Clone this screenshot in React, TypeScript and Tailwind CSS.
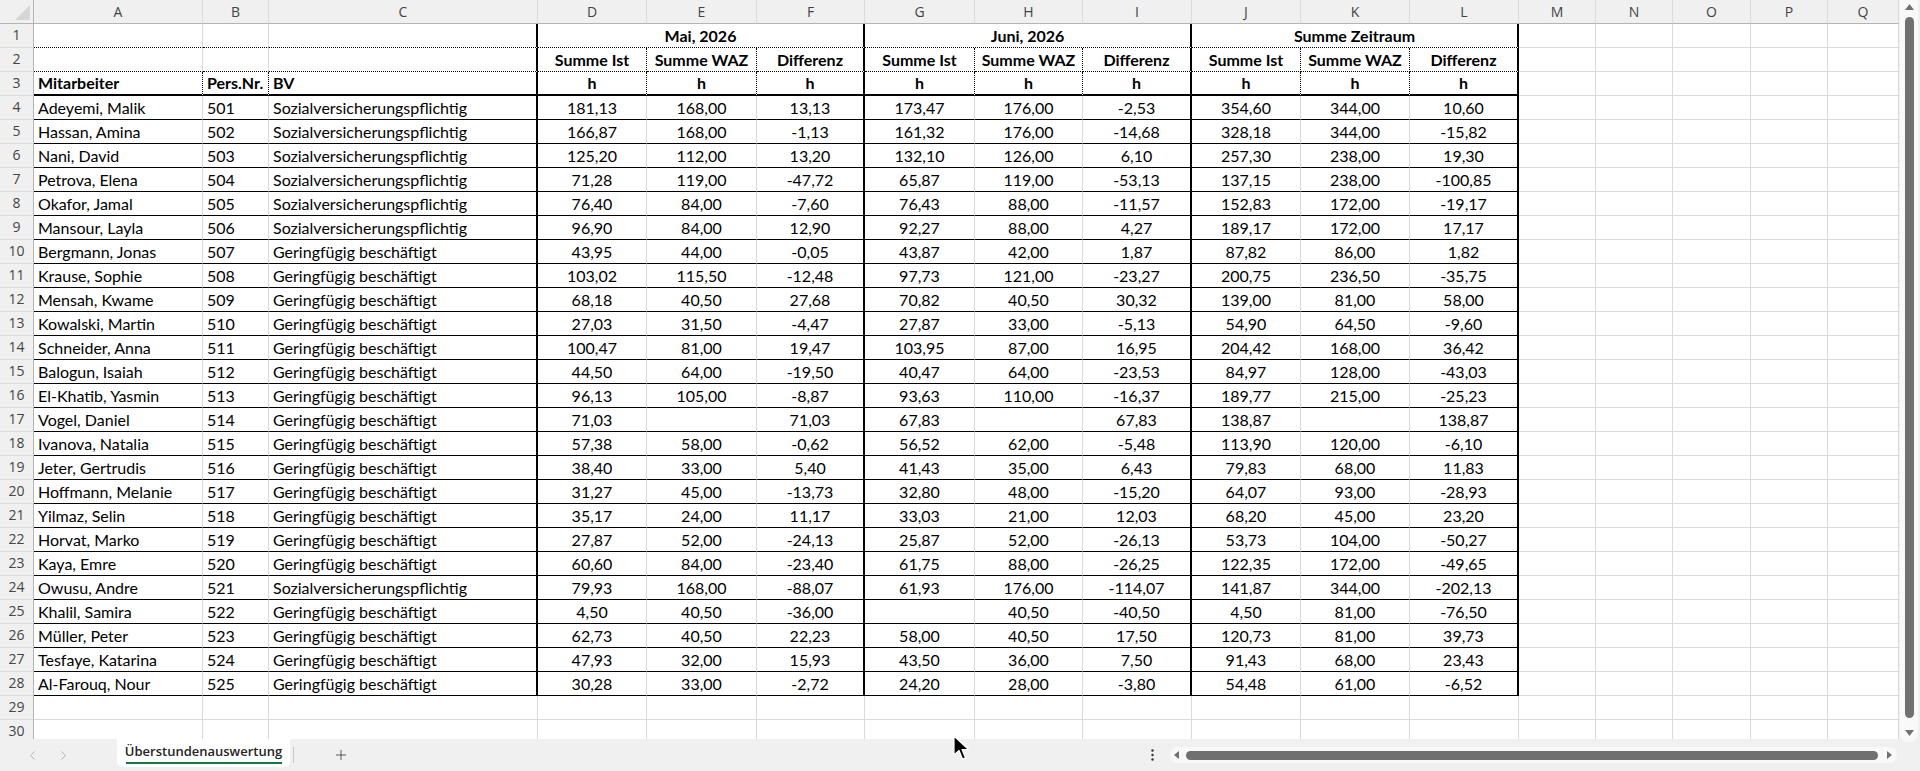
import React from "react";
import { ChevronLeft, ChevronRight, Plus } from "lucide-react";

const LETTERS = ["A", "B", "C", "D", "E", "F", "G", "H", "I", "J", "K", "L", "M", "N", "O", "P", "Q"];

const S = "Sozialversicherungspflichtig";
const G = "Geringfügig beschäftigt";

const DATA: string[][] = [
  ["Adeyemi, Malik", "501", S, "181,13", "168,00", "13,13", "173,47", "176,00", "-2,53", "354,60", "344,00", "10,60"],
  ["Hassan, Amina", "502", S, "166,87", "168,00", "-1,13", "161,32", "176,00", "-14,68", "328,18", "344,00", "-15,82"],
  ["Nani, David", "503", S, "125,20", "112,00", "13,20", "132,10", "126,00", "6,10", "257,30", "238,00", "19,30"],
  ["Petrova, Elena", "504", S, "71,28", "119,00", "-47,72", "65,87", "119,00", "-53,13", "137,15", "238,00", "-100,85"],
  ["Okafor, Jamal", "505", S, "76,40", "84,00", "-7,60", "76,43", "88,00", "-11,57", "152,83", "172,00", "-19,17"],
  ["Mansour, Layla", "506", S, "96,90", "84,00", "12,90", "92,27", "88,00", "4,27", "189,17", "172,00", "17,17"],
  ["Bergmann, Jonas", "507", G, "43,95", "44,00", "-0,05", "43,87", "42,00", "1,87", "87,82", "86,00", "1,82"],
  ["Krause, Sophie", "508", G, "103,02", "115,50", "-12,48", "97,73", "121,00", "-23,27", "200,75", "236,50", "-35,75"],
  ["Mensah, Kwame", "509", G, "68,18", "40,50", "27,68", "70,82", "40,50", "30,32", "139,00", "81,00", "58,00"],
  ["Kowalski, Martin", "510", G, "27,03", "31,50", "-4,47", "27,87", "33,00", "-5,13", "54,90", "64,50", "-9,60"],
  ["Schneider, Anna", "511", G, "100,47", "81,00", "19,47", "103,95", "87,00", "16,95", "204,42", "168,00", "36,42"],
  ["Balogun, Isaiah", "512", G, "44,50", "64,00", "-19,50", "40,47", "64,00", "-23,53", "84,97", "128,00", "-43,03"],
  ["El-Khatib, Yasmin", "513", G, "96,13", "105,00", "-8,87", "93,63", "110,00", "-16,37", "189,77", "215,00", "-25,23"],
  ["Vogel, Daniel", "514", G, "71,03", "", "71,03", "67,83", "", "67,83", "138,87", "", "138,87"],
  ["Ivanova, Natalia", "515", G, "57,38", "58,00", "-0,62", "56,52", "62,00", "-5,48", "113,90", "120,00", "-6,10"],
  ["Jeter, Gertrudis", "516", G, "38,40", "33,00", "5,40", "41,43", "35,00", "6,43", "79,83", "68,00", "11,83"],
  ["Hoffmann, Melanie", "517", G, "31,27", "45,00", "-13,73", "32,80", "48,00", "-15,20", "64,07", "93,00", "-28,93"],
  ["Yilmaz, Selin", "518", G, "35,17", "24,00", "11,17", "33,03", "21,00", "12,03", "68,20", "45,00", "23,20"],
  ["Horvat, Marko", "519", G, "27,87", "52,00", "-24,13", "25,87", "52,00", "-26,13", "53,73", "104,00", "-50,27"],
  ["Kaya, Emre", "520", G, "60,60", "84,00", "-23,40", "61,75", "88,00", "-26,25", "122,35", "172,00", "-49,65"],
  ["Owusu, Andre", "521", S, "79,93", "168,00", "-88,07", "61,93", "176,00", "-114,07", "141,87", "344,00", "-202,13"],
  ["Khalil, Samira", "522", G, "4,50", "40,50", "-36,00", "", "40,50", "-40,50", "4,50", "81,00", "-76,50"],
  ["Müller, Peter", "523", G, "62,73", "40,50", "22,23", "58,00", "40,50", "17,50", "120,73", "81,00", "39,73"],
  ["Tesfaye, Katarina", "524", G, "47,93", "32,00", "15,93", "43,50", "36,00", "7,50", "91,43", "68,00", "23,43"],
  ["Al-Farouq, Nour", "525", G, "30,28", "33,00", "-2,72", "24,20", "28,00", "-3,80", "54,48", "61,00", "-6,52"],
];

// border presets for cells
const R_GRID = "border-r border-r-[#dadada]";
const R_THICK = "border-r-2 border-r-black";
const R_DOT = "border-r border-r-black [border-right-style:dotted]";
const B_GRID = "border-b border-b-[#dadada]";
const B_DOT = "border-b border-b-black [border-bottom-style:dotted]";
const B_THICK = "border-b-2 border-b-black";
const B_THIN = "border-b border-b-black";

const CELL = "flex items-center overflow-hidden whitespace-nowrap text-[16px] leading-[18px] text-black px-[4px]";

function rightBorder(row: number, col: number): string {
  if (row <= 28 && (col === 2 || col === 5 || col === 8 || col === 11)) return R_THICK;
  if ((row === 2 || row === 3) && (col === 3 || col === 4 || col === 6 || col === 7 || col === 9 || col === 10)) return R_DOT;
  if (row === 3 && (col === 0 || col === 1)) return R_DOT;
  return R_GRID;
}

function bottomBorder(row: number, col: number): string {
  if (col > 11) return B_GRID;
  if (row === 1 || row === 2) return B_DOT;
  if (row === 3) return B_THICK;
  if (row >= 4 && row <= 28) return B_THIN;
  return B_GRID;
}

function RowHead({ n }: { n: number }) {
  return (
    <div className="flex items-start justify-center bg-[#f0f0f0] border-r border-r-[#b4b4b4] border-b border-b-[#dadada] pt-[4px] text-[14px] leading-[14px] text-[#444] [font-family:'Open_Sans',sans-serif]">
      {n}
    </div>
  );
}

function Cell({ row, col, text, bold }: { row: number; col: number; text?: string; bold?: boolean }) {
  const align = col >= 3 ? "justify-center" : "justify-start";
  return (
    <div className={`${CELL} ${align} ${rightBorder(row, col)} ${bottomBorder(row, col)} ${bold ? "font-bold" : ""}`}>
      {text}
    </div>
  );
}

function MergedHead({ text }: { text: string }) {
  return (
    <div className={`${CELL} col-span-3 justify-center font-bold ${R_THICK} ${B_DOT}`}>{text}</div>
  );
}

function Sheet() {
  const cells: React.ReactNode[] = [];

  // corner + column letters
  cells.push(
    <div key="corner" className="relative bg-[#f0f0f0] border-r border-r-[#b4b4b4] border-b border-b-[#b4b4b4]">
      <svg className="absolute left-[15px] top-[5px]" width="15" height="15" viewBox="0 0 15 15">
        <polygon points="15,0 15,15 0,15" fill="#d6d6d6" />
      </svg>
    </div>
  );
  LETTERS.forEach((l) =>
    cells.push(
      <div
        key={`h-${l}`}
        className="flex items-center justify-center bg-[#f0f0f0] border-r border-r-[#dadada] border-b border-b-[#b4b4b4] text-[14px] text-[#444] [font-family:'Open_Sans',sans-serif]"
      >
        {l}
      </div>
    )
  );

  // row 1: merged period headings
  cells.push(<RowHead key="r1" n={1} />);
  for (let c = 0; c < 3; c++) cells.push(<Cell key={`1-${c}`} row={1} col={c} />);
  cells.push(<MergedHead key="1-mai" text="Mai, 2026" />);
  cells.push(<MergedHead key="1-juni" text="Juni, 2026" />);
  cells.push(<MergedHead key="1-sum" text="Summe Zeitraum" />);
  for (let c = 12; c < 17; c++) cells.push(<Cell key={`1-${c}`} row={1} col={c} />);

  // row 2: column titles
  const titles = ["", "", "", "Summe Ist", "Summe WAZ", "Differenz", "Summe Ist", "Summe WAZ", "Differenz", "Summe Ist", "Summe WAZ", "Differenz"];
  cells.push(<RowHead key="r2" n={2} />);
  for (let c = 0; c < 17; c++) cells.push(<Cell key={`2-${c}`} row={2} col={c} text={titles[c]} bold />);

  // row 3: units
  const units = ["Mitarbeiter", "Pers.Nr.", "BV", "h", "h", "h", "h", "h", "h", "h", "h", "h"];
  cells.push(<RowHead key="r3" n={3} />);
  for (let c = 0; c < 17; c++) cells.push(<Cell key={`3-${c}`} row={3} col={c} text={units[c]} bold />);

  // data rows
  DATA.forEach((d, i) => {
    const row = i + 4;
    cells.push(<RowHead key={`r${row}`} n={row} />);
    for (let c = 0; c < 17; c++) cells.push(<Cell key={`${row}-${c}`} row={row} col={c} text={d[c]} />);
  });

  // trailing empty rows
  for (let row = 29; row <= 30; row++) {
    cells.push(<RowHead key={`r${row}`} n={row} />);
    for (let c = 0; c < 17; c++) cells.push(<Cell key={`${row}-${c}`} row={row} col={c} />);
  }

  return (
    <div className="h-[739px] w-[1899px] overflow-hidden bg-white">
      <div className="grid grid-cols-[34px_169px_66px_269px_109px_110px_108px_110px_108px_109px_109px_109px_109px_77px_77px_78px_77px_71px] grid-rows-[24px_repeat(30,24px)]">
        {cells}
      </div>
    </div>
  );
}

function VScroll() {
  return (
    <div className="flex h-[739px] w-[21px] justify-end bg-[#f0f0f0] pr-[2px]">
      <div className="flex h-[742px] w-[18px] flex-col items-center rounded-b-[8px] bg-[#f9f9f9] pt-[4px]">
        <svg width="9" height="6" viewBox="0 0 9 6">
          <polygon points="4.5,0 9,6 0,6" fill="#707070" />
        </svg>
        <div className="mt-[7px] h-[701px] w-[9px] rounded-full bg-[#707070]" />
        <svg className="mt-[12px]" width="9" height="6" viewBox="0 0 9 6">
          <polygon points="0,0 9,0 4.5,6" fill="#707070" />
        </svg>
      </div>
    </div>
  );
}

function TabBar() {
  return (
    <div className="flex h-[32px] items-start bg-[#f0f0f0] [font-family:'Open_Sans',sans-serif]">
      <div className="flex h-[30px] w-[117px] items-center pl-[25px] pt-[2px] text-[#a8a8a8]">
        <ChevronLeft size={15} strokeWidth={1.4} />
        <ChevronRight size={15} strokeWidth={1.4} className="ml-[16px]" />
      </div>
      <div className="flex h-[28px] w-[173px] flex-col items-center rounded-b-[6px] bg-white pt-[4px]">
        <span className="text-[13px] font-semibold leading-[17px] text-[#242424]">Überstundenauswertung</span>
        <div className="mt-[2px] h-[2px] w-[156px] bg-[#107c41]" />
      </div>
      <div className="ml-[3px] mt-[8px] h-[16px] w-px bg-[#c8c8c8]" />
      <div className="ml-[39px] flex h-[30px] items-center pt-[2px] text-[#444]">
        <Plus size={16} strokeWidth={1.3} />
      </div>
      <div className="ml-[802px] flex h-[30px] items-center pt-[2px]">
        <svg width="3" height="12" viewBox="0 0 3 12">
          <circle cx="1.5" cy="1.5" r="1.2" fill="#333" />
          <circle cx="1.5" cy="6" r="1.2" fill="#333" />
          <circle cx="1.5" cy="10.5" r="1.2" fill="#333" />
        </svg>
      </div>
      <div className="ml-[16px] mt-[8px] flex h-[16px] w-[727px] items-center rounded-full bg-[#f9f9f9] px-[4px]">
        <svg width="5" height="8" viewBox="0 0 5 8">
          <polygon points="0,4 5,0 5,8" fill="#707070" />
        </svg>
        <div className="ml-[7px] h-[9px] w-[692px] rounded-full bg-[#707070]" />
        <svg className="ml-[9px]" width="5" height="8" viewBox="0 0 5 8">
          <polygon points="0,0 5,4 0,8" fill="#707070" />
        </svg>
      </div>
    </div>
  );
}

export default function App() {
  return (
    <div className="relative h-[771px] w-[1920px] overflow-hidden bg-[#f0f0f0] [font-family:Lato,'Liberation_Sans',sans-serif]">
      <div className="flex">
        <Sheet />
        <VScroll />
      </div>
      <TabBar />
      {/* mouse pointer resting over the sheet tab strip */}
      <svg className="absolute left-[953px] top-[735px]" width="17" height="26" viewBox="0 0 17 26">
        <path d="M1 1 L1 20 L6 15.5 L9.5 24 L12.5 22.8 L9 14.5 L15.5 14.5 Z" fill="#000" stroke="#fff" strokeWidth="1.2" strokeLinejoin="round" />
      </svg>
    </div>
  );
}
